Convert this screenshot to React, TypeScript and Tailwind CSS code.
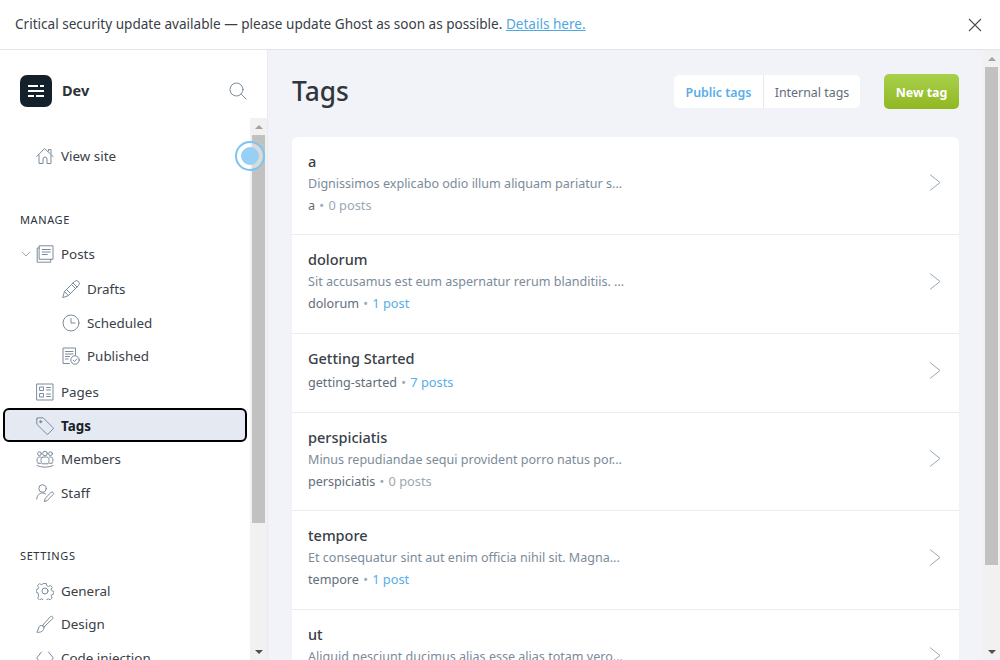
import React from 'react';

const ic = 'shrink-0 text-[#7c8b9a]';

const Svg: React.FC<{ size?: number; children: React.ReactNode }> = ({ size = 18, children }) => (
    <svg className={ic} width={size} height={size} viewBox="0 0 18 18" fill="none" stroke="currentColor" strokeWidth="1" strokeLinecap="round" strokeLinejoin="round">
        {children}
    </svg>
);

const HomeIcon = () => <Svg><path d="M.8 9.500 8.500 1.500l8.700 8" /><path d="M3 8v8.500h4V12a2 2 0 0 1 4 0v4.500h4V8" /><path d="M12.500 4V2.500H15V6.500" /></Svg>;
const PostsIcon = () => <Svg><path d="M3.500.8h13.500v13.500H3.500z" /><path d="M3.500 3H1.200v14.200h13.500v-2.900" /><path d="M6.300 4.500h8M6.300 7h8M6.300 9.500h5" /></Svg>;
const PencilIcon = () => <Svg><path d="M.8 17.200 2.500 11.500 12.500 1.500a2.300 2.300 0 0 1 4 4L6.500 15.500z" /><path d="m2.500 11.500 4 4M11 3l4 4M9.500 4.500l4 4M4.500 9.500l4 4" /></Svg>;
const ClockIcon = () => <Svg><circle cx="9" cy="9" r="8" /><path d="M9 4.500V9h4" /></Svg>;
const PublishedIcon = () => <Svg><path d="M7.500 16.500H1V1h12.500v7" /><path d="M3.500 4.500h7.500M3.500 7h7.500M3.500 9.500h4M3.500 12h2.500" /><circle cx="13" cy="13" r="4.200" /><path d="m11.200 13.200 1.400 1.300 2.200-2.600" /></Svg>;
const PagesIcon = () => <Svg><path d="M1 1h16v16H1z" /><path d="M4 4h3.500v3.500H4zM4 10.500h3.500V14H4zM10.500 4.500h4M10.500 7h4M10.500 11h4M10.500 13.500h4" /></Svg>;
const TagIcon = () => <Svg><path d="M.8 1.800v5.400L10.700 17a1 1 0 0 0 1.400 0l4.900-4.900a1 1 0 0 0 0-1.400L7.200.8H1.800a1 1 0 0 0-1 1z" /><circle cx="4.700" cy="4.700" r="1" fill="currentColor" /></Svg>;
const MembersIcon = () => <Svg><circle cx="9" cy="3.500" r="2.300" /><circle cx="3.500" cy="3.700" r="1.900" /><circle cx="14.500" cy="3.700" r="1.900" /><path d="M6 7.500c-.8.500-1 1.500-1 3 0 1.500.5 2.500 1 2.500v.8h6V13c.5 0 1-1 1-2.500 0-1.500-.2-2.500-1-3-1.800-.8-4.200-.8-6 0z" /><path d="M4.500 7c-1.800-.5-3.500.3-3.500 3 0 1.200.3 2 .8 2.300v1h2.700M13.500 7c1.800-.5 3.500.3 3.500 3 0 1.200-.3 2-.8 2.300v1h-2.700" /><path d="M1 15.500c5 2.200 11 2.200 16 0" /></Svg>;
const StaffIcon = () => <Svg><circle cx="6.500" cy="4.500" r="3.700" /><path d="M.8 15c0-3.500 2.500-6 5.700-6 1 0 2.200.3 3 .9" /><path d="M8.500 17.200l.8-3L15 8.500a1.400 1.400 0 0 1 2.100 2l-5.600 5.800z" /></Svg>;
const GearIcon = () => <Svg><circle cx="9" cy="9" r="3" /><path d="M7.600 1.500h2.800l.5 2.200 1.700.8 2-1.100 1.900 2-1.100 1.900.7 1.700 2 .6v2.700l-2 .5-.7 1.700 1 2-1.900 1.800-2-1-1.600.7-.5 2H7.600l-.6-2-1.600-.7-2 1-1.900-1.800 1-2L1.800 11 0 10.500V7.800l1.800-.6.700-1.700-1-1.900 1.900-2 2 1.100 1.600-.8z" transform="translate(.2 .1) scale(.97)" /></Svg>;
const BrushIcon = () => <Svg><path d="M6.500 10.500 14.500 1.500a1.600 1.600 0 0 1 2.200 2.200L8 12z" /><path d="M6.500 10.500c-2-.5-3.500.5-4 2.500-.2 1-.6 3-1.700 4.200 3.200.5 7.700-.7 7.200-5.200z" /></Svg>;
const CodeIcon = () => <Svg><path d="M5.500 3 .7 9l4.800 6M12.500 3l4.800 6-4.800 6" /></Svg>;
const ChevronIcon = () => (
    <svg className="shrink-0 text-[#9aa8b4]" width="12" height="18" viewBox="0 0 12 18" fill="none" stroke="currentColor" strokeWidth="1"><path d="M1 1l10 8-10 8" /></svg>
);

const Scrollbar: React.FC<{ thumbHeight: number; bar: string }> = ({ thumbHeight, bar }) => (
    <div className={`${bar} flex flex-col w-[17px] shrink-0 bg-[#f1f1f1]`}>
        <div className="h-[17px] shrink-0 flex items-center justify-center">
            <div className="w-0 h-0 border-x-[4px] border-x-transparent border-b-[4px] border-b-[#a3a3a3]" />
        </div>
        <div className="flex-1 min-h-0 flex flex-col">
            <div className="mx-[2px] bg-[#c1c1c1]" style={{ height: thumbHeight }} />
        </div>
        <div className="h-[17px] shrink-0 flex items-center justify-center">
            <div className="w-0 h-0 border-x-[4px] border-x-transparent border-t-[4px] border-t-[#505050]" />
        </div>
    </div>
);

const NavItem: React.FC<{ icon: React.ReactNode; label: string; sub?: boolean; className?: string }> = ({ icon, label, sub, className }) => (
    <div className={`flex items-center h-[33.500px] text-[13.400px] text-[#394047] gap-[7px] ${sub ? 'pl-[62px]' : 'pl-[36px]'} ${className ?? ''}`}>
        {icon}
        <span>{label}</span>
    </div>
);

const tags = [
    { name: 'a', desc: 'Dignissimos explicabo odio illum aliquam pariatur s...', slug: 'a', count: '0 posts', h: 'h-[98px]' },
    { name: 'dolorum', desc: 'Sit accusamus est eum aspernatur rerum blanditiis. ...', slug: 'dolorum', count: '1 post', h: 'h-[99px]' },
    { name: 'Getting Started', desc: '', slug: 'getting-started', count: '7 posts', h: 'h-[79px]' },
    { name: 'perspiciatis', desc: 'Minus repudiandae sequi provident porro natus por...', slug: 'perspiciatis', count: '0 posts', h: 'h-[98px]' },
    { name: 'tempore', desc: 'Et consequatur sint aut enim officia nihil sit. Magna...', slug: 'tempore', count: '1 post', h: 'h-[99px]' },
    { name: 'ut', desc: 'Aliquid nesciunt ducimus alias esse alias totam vero...', slug: 'ut', count: '1 post', h: 'h-[98px]' },
];

const App: React.FC = () => {
    return (
        <div className="h-[660px] w-[1000px] overflow-hidden flex flex-col bg-white font-['Noto_Sans',sans-serif]">
            <div className="h-[50px] shrink-0 flex items-center justify-between border-b border-[#e2e4e6] pl-[15px] pr-[17px] text-[13.570px] text-[#394047]">
                <p>Critical security update available — please update Ghost as soon as possible. <span className="text-[#4fa8e0] underline">Details here.</span></p>
                <svg width="16" height="16" viewBox="0 0 16 16" fill="none" stroke="#4a4f55" strokeWidth="1.100"><path d="M2 2l12 12M14 2 2 14" /></svg>
            </div>
            <div className="flex flex-1 min-h-0">
                <aside className="w-[268px] shrink-0 flex flex-col border-r border-[#e8ebf0] bg-white">
                    <div className="h-[68px] shrink-0 flex items-start pt-[25px] pl-[20px] pr-[20px]">
                        <div className="w-[32px] h-[32px] rounded-[7px] bg-[#15212a] flex flex-col items-center justify-center gap-[3px]">
                            <div className="flex gap-[2px]"><div className="w-[10px] h-[2px] bg-white" /><div className="w-[4px] h-[2px] bg-white" /></div>
                            <div className="flex gap-[2px]"><div className="w-[16px] h-[2px] bg-white" /></div>
                            <div className="flex gap-[2px]"><div className="w-[6px] h-[2px] bg-white" /><div className="w-[8px] h-[2px] bg-white" /></div>
                        </div>
                        <span className="ml-[10px] mt-[5px] text-[14.500px] font-bold text-[#2b3238]">Dev</span>
                        <div className="ml-auto mt-[7px]"><Svg><circle cx="7.500" cy="7.500" r="6.500" /><path d="m12.500 12.500 4.500 4.500" /></Svg></div>
                    </div>
                    <div className="flex flex-1 min-h-0">
                        <div className="flex-1 min-w-0 overflow-hidden relative">
                            <NavItem className="mt-[21px]" icon={<HomeIcon />} label="View site" />
                            <div className="mt-[38px] pl-[20px] text-[11px] tracking-[0.6px] text-[#2b3238] h-[18px] leading-[18px]">MANAGE</div>
                            <div className="mt-[9px] relative">
                                <svg className="absolute left-[21px] top-[13px] text-[#9aa8b4]" width="10" height="7" viewBox="0 0 10 7" fill="none" stroke="currentColor"><path d="M1 1l4 4 4-4" /></svg>
                                <NavItem icon={<PostsIcon />} label="Posts" />
                            </div>
                            <NavItem sub className="mt-[1.500px]" icon={<PencilIcon />} label="Drafts" />
                            <NavItem sub icon={<ClockIcon />} label="Scheduled" />
                            <NavItem sub icon={<PublishedIcon />} label="Published" />
                            <NavItem className="mt-[2.500px]" icon={<PagesIcon />} label="Pages" />
                            <div className="-mt-[1px] mx-[3px] h-[34px] flex items-center gap-[7px] pl-[31px] pt-[2px] rounded-[6px] border-2 border-black bg-[#e5e9f1] text-[13.400px] font-bold text-[#15212a]">
                                <TagIcon />
                                <span>Tags</span>
                            </div>
                            <NavItem icon={<MembersIcon />} label="Members" />
                            <NavItem className="mt-[0.500px]" icon={<StaffIcon />} label="Staff" />
                            <div className="mt-[37px] pl-[20px] text-[11px] tracking-[0.6px] text-[#2b3238] h-[18px] leading-[18px]">SETTINGS</div>
                            <NavItem className="mt-[9.500px]" icon={<GearIcon />} label="General" />
                            <NavItem icon={<BrushIcon />} label="Design" />
                            <NavItem icon={<CodeIcon />} label="Code injection" />
                        </div>
                        <Scrollbar bar="h-full" thumbHeight={388} />
                    </div>
                    {/* focus ring over the sidebar scrollbar */}
                    <div className="absolute left-[235px] top-[141px] w-[30px] h-[30px] rounded-full border-[2px] border-[#7cc4f0] bg-white/40 flex items-center justify-center">
                        <div className="w-[18px] h-[18px] rounded-full bg-[#98d0f5]" />
                    </div>
                </aside>
                <main className="flex-1 min-w-0 bg-[#f1f3f8] pl-[24px] pr-[24px] overflow-hidden">
                    <div className="h-[87px] flex items-start">
                        <h1 className="mt-[23px] text-[26.300px] leading-[36px] font-medium text-[#2f363c]">Tags</h1>
                        <div className="ml-auto mt-[25px] flex h-[33px] rounded-[5px] bg-white text-[12.400px] overflow-hidden">
                            <div className="w-[90px] pt-[3px] flex items-center justify-center font-semibold text-[#57aee8] border-r border-[#e5e9f1]">Public tags</div>
                            <div className="w-[96px] pt-[3px] flex items-center justify-center text-[#626d79]">Internal tags</div>
                        </div>
                        <button className="ml-[24px] mt-[24px] w-[75px] h-[35px] pt-[3px] rounded-[5px] bg-linear-to-b from-[#a9d04b] to-[#90b820] text-[12.400px] font-bold text-white">New tag</button>
                    </div>
                    <div className="rounded-[6px] bg-white overflow-hidden">
                        {tags.map(tag => (
                            <div key={tag.name} className={`${tag.h} relative pt-[13px] pl-[16px] pr-[18px] flex items-start justify-between border-b border-[#e8edf2]`}>
                                <div>
                                    <div className="text-[14.500px] leading-[23px] text-[#394047] font-medium">{tag.name}</div>
                                    {tag.desc && <div className="text-[12.550px] leading-[22px] text-[#7c8b9a]">{tag.desc}</div>}
                                    <div className={`text-[12.600px] leading-[21px] text-[#626d79] ${tag.desc ? '' : 'mt-[2px]'}`}>
                                        {tag.slug} <span className="mx-[1px] text-[#9aa8b4]">•</span>{' '}
                                        <span className={tag.count === '0 posts' ? 'text-[#9aa8b4] text-[12.800px] leading-none' : 'text-[#57aee8] text-[12.800px] leading-none'}>{tag.count}</span>
                                    </div>
                                </div>
                                <div className="self-center -translate-y-[9.500px]"><ChevronIcon /></div>
                            </div>
                        ))}
                    </div>
                </main>
                <Scrollbar bar="" thumbHeight={498} />
            </div>
        </div>
    );
};

export default App;
